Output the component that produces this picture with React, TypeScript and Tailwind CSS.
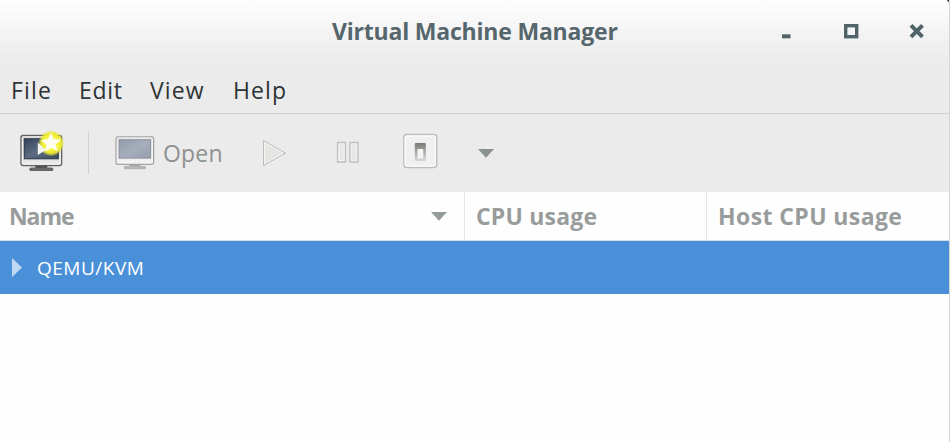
import type { ReactNode } from "react";

function Monitor({ muted = false }: { muted?: boolean }) {
  const id = muted ? "muted" : "active";
  return (
    <svg width="44" height="42" viewBox="0 0 44 42" overflow="visible" className="block shrink-0">
      <defs>
        <linearGradient id={`${id}-case`} x1="0" y1="0" x2="0" y2="1">
          <stop offset="0" stopColor={muted ? "#dedede" : "#c4c5c2"} />
          <stop offset="1" stopColor={muted ? "#f3f3f3" : "#ececea"} />
        </linearGradient>
        <linearGradient id={`${id}-screen`} x1="0" y1="0" x2="1" y2="1">
          <stop offset="0" stopColor={muted ? "#929baa" : "#33425a"} />
          <stop offset="0.5" stopColor={muted ? "#a6aebb" : "#5c6c82"} />
          <stop offset="1" stopColor={muted ? "#989fac" : "#3d4a5f"} />
        </linearGradient>
        <radialGradient id={`${id}-glow`}>
          <stop offset="0.6" stopColor="#f6f440" />
          <stop offset="0.8" stopColor="#ebe92d" stopOpacity="0.9" />
          <stop offset="1" stopColor="#ebe92d" stopOpacity="0" />
        </radialGradient>
      </defs>
      <g transform={muted ? "translate(1.5 1.4) scale(.925 .915)" : "translate(.3 -.2)"}>
        <path d="M16 33h12v4H16z" fill={muted ? "#a5a5a5" : "#484848"} />
        <rect x="10" y="35.7" width="24" height="3.6" rx="1.5" fill={muted ? "#b4b4b4" : "#666"} />
        <rect x="1.7" y="3.7" width="40.6" height="30" rx="2" fill={`url(#${id}-case)`} stroke={muted ? "#a3a3a2" : "#60615e"} strokeWidth="1.4" />
        <rect x="3" y="5" width="38" height="27.4" rx="1" fill="none" stroke="#f6f6f6" />
        <rect x="5" y="7" width="34" height="20" fill={`url(#${id}-screen)`} stroke={muted ? "#858d9b" : "#293548"} />
      </g>
      {!muted && (
        <>
          <circle cx="32.2" cy="11.3" r="13" fill="url(#active-glow)" />
          <path d="M18.8 10.5v12.5l8-5z" fill="#f5f6f4" />
          <path d="M31.8 .8l3 6.3 7.2.6-5.4 4.8 2.3 6.7-6.6-3.3-6.2 3.8 1.2-7-5.3-4.7 7-.8z" fill="#fffff4" />
        </>
      )}
    </svg>
  );
}

function DownArrow({ color }: { color: string }) {
  return (
    <svg width="16" height="9" viewBox="0 0 16 9" className="block shrink-0">
      <path d="M0 0h16L8 8.7z" fill={color} />
    </svg>
  );
}

function MenuItem({ children, className }: { children: ReactNode; className: string }) {
  return <span className={`block shrink-0 whitespace-nowrap ${className}`}>{children}</span>;
}

export default function App() {
  return (
    <div className="flex h-[442px] w-[950px] flex-col overflow-hidden border-r border-[#d5d5d5] bg-[#fefefe] font-['Open_Sans','Noto_Sans',sans-serif]">
      <header className="flex h-[62px] shrink-0 bg-linear-to-b from-[#fefefe] to-[#ebebeb] text-[#55666c]">
        <h1 className="ml-[332px] mt-[14px] h-[34px] w-[450px] whitespace-nowrap text-[23px] font-bold leading-[34px] tracking-[-0.2px]">
          Virtual Machine Manager
        </h1>
        <svg width="167" height="62" viewBox="782 0 167 62" className="block shrink-0" fill="none" stroke="#4f6369">
          <path d="M780 36.3h11" strokeWidth="4" transform="translate(-.5)" />
          <rect x="845.7" y="25.7" width="11" height="11" strokeWidth="3.4" />
          <path d="M911 25.4l11.5 11.5m0-11.5L911 36.9" strokeWidth="4" />
          <path d="M946.5 0h3v3z" fill="#36505e" stroke="none" />
        </svg>
      </header>
      <nav className="flex h-[52px] shrink-0 items-center border-b border-[#d1d1d1] bg-[#ebebeb] pl-[11px] pt-[5px] text-[23px] text-[#2e3436]">
        <MenuItem className="w-[68px] tracking-[1.2px]">File</MenuItem>
        <MenuItem className="w-[71px] tracking-[0.7px]">Edit</MenuItem>
        <MenuItem className="w-[83px] tracking-[1.1px]">View</MenuItem>
        <MenuItem className="w-[70px] tracking-[1.1px]">Help</MenuItem>
      </nav>
      <div className="flex h-[78px] shrink-0 items-center bg-[#ebebeb] pl-[19px]">
        <Monitor />
        <div className="ml-[25px] h-[42px] w-px bg-[#d2d2d2]" />
        <div className="ml-[24px]"><Monitor muted /></div>
        <span className="ml-[6px] w-[92px] text-[23px] tracking-[0.2px] text-[#8e9191]">Open</span>
        <svg width="190" height="42" viewBox="255 132 190 42" className="block shrink-0">
          <defs>
            <linearGradient id="switch-shade" x1="0" y1="0" x2="0" y2="1">
              <stop stopColor="#777977" />
              <stop offset="1" stopColor="#d8d9d7" />
            </linearGradient>
          </defs>
          <path d="M263.5 140.5v25l22-12.3z" fill="#e5e5e4" stroke="#bdbebc" strokeLinejoin="round" />
          <path d="M264.5 142.5l18.5 10.7-18.5 10.3z" fill="none" stroke="#f5f5f4" />
          <path d="M337.5 142.5h8v19.5h-8zM350 142.5h8v19.5h-8z" fill="#e7e7e6" stroke="#bfc0be" strokeWidth="1.3" />
          <path d="M339 144h5v16.5h-5zM351.5 144h5v16.5h-5z" fill="none" stroke="#f3f3f2" />
          <rect x="403.8" y="134.5" width="33" height="33" rx="3" fill="#f0f0f0" stroke="#bbb" strokeWidth="1.3" />
          <rect x="405.3" y="136" width="30" height="30" rx="2" fill="none" stroke="#fafafa" strokeWidth="1.3" />
          <rect x="414.8" y="143" width="11" height="18" rx="1" fill="url(#switch-shade)" />
          <rect x="417.5" y="149" width="5.8" height="9.5" fill="#f4f4f3" />
        </svg>
        <div className="ml-[33px]"><DownArrow color="#899192" /></div>
      </div>
      <div className="flex h-[49px] shrink-0 border-b border-[#d5dce4] bg-[#fefefe] text-[23px] font-bold leading-[49px] text-[#989c9b]">
        <div className="flex w-[465px] items-center justify-between border-r border-[#e6e6e6] pl-[9px] pr-[17px]">
          <span className="tracking-[-1.1px]">Name</span>
          <DownArrow color="#949b9b" />
        </div>
        <div className="w-[242px] whitespace-nowrap border-r border-[#e6e6e6] pl-[11px] tracking-[0.2px]">CPU usage</div>
        <div className="whitespace-nowrap pl-[11px] tracking-[0.4px]">Host CPU usage</div>
      </div>
      <div className="flex h-[53px] shrink-0 items-center bg-[#4a90d9] pl-[12px] text-white">
        <svg width="10" height="19" viewBox="0 0 10 19" className="block">
          <path d="M0 0l10 9.5L0 19z" fill="#bdd9f4" />
        </svg>
        <span className="ml-[15px] text-[19px] leading-[54px] tracking-[0.5px]">QEMU/KVM</span>
      </div>
    </div>
  );
}
